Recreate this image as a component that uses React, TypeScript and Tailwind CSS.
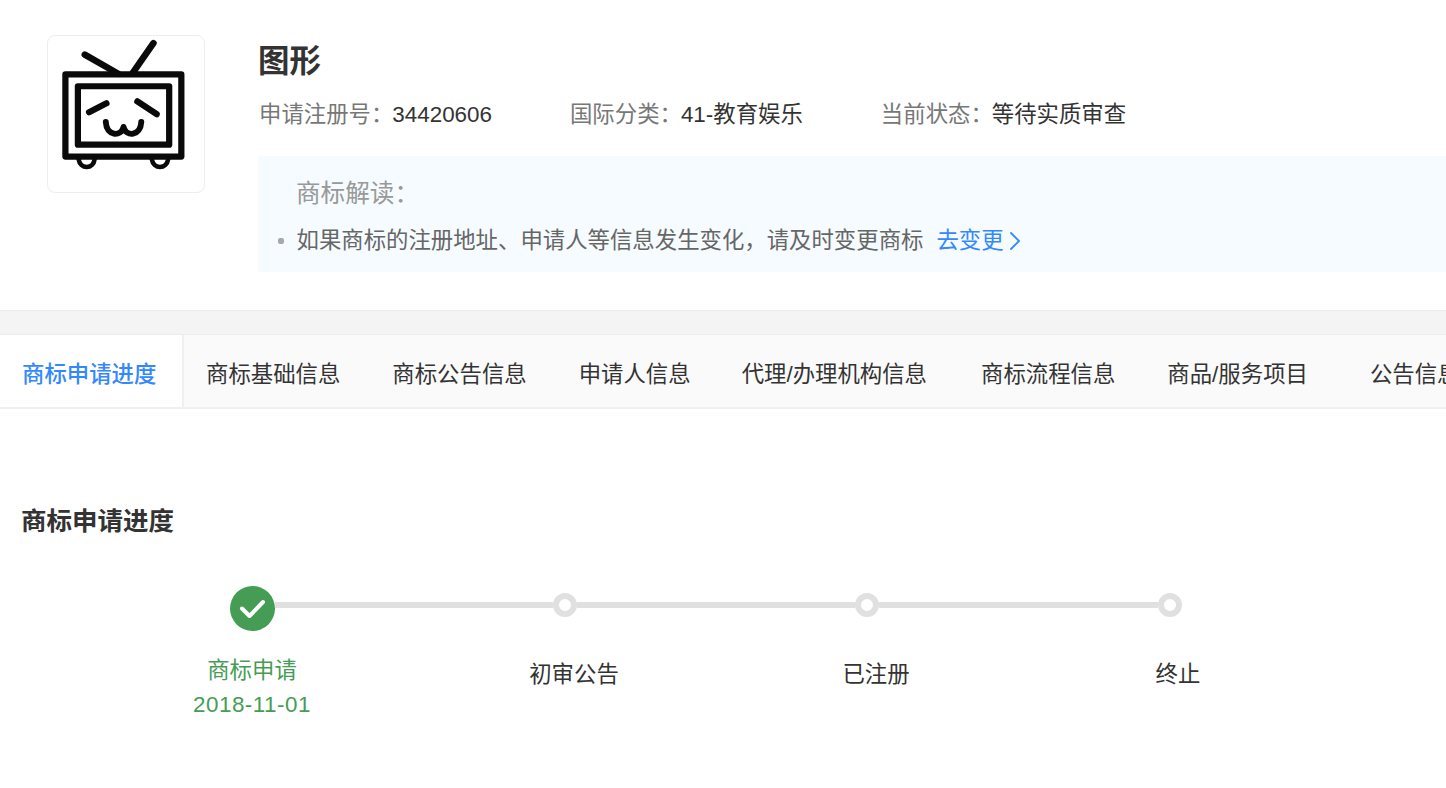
const tabs = [
  { label: '商标基础信息', className: 'pl-[22px] pr-[26px]' },
  { label: '商标公告信息', className: 'px-[26px]' },
  { label: '申请人信息', className: 'px-[26px]' },
  { label: '代理/办理机构信息', className: 'pl-[25px] pr-[28px]' },
  { label: '商标流程信息', className: 'px-[26px]' },
  { label: '商品/服务项目', className: 'px-[26px]' },
  { label: '公告信息', className: 'pl-[36px]' },
]

const infos = [
  { label: '申请注册号：', value: '34420606' },
  { label: '国际分类：', value: '41-教育娱乐' },
  { label: '当前状态：', value: '等待实质审查' },
]

function Logo() {
  return (
    <svg viewBox="50 43 475 475" className="h-full w-full" fill="none" stroke="#0a0a0a" strokeLinecap="round" strokeLinejoin="round">
      <path d="M162 100L264 158M371 65L308 155" strokeWidth="20" />
      <rect x="103" y="160" width="353" height="250" strokeWidth="19" />
      <rect x="141" y="196" width="278" height="178" strokeWidth="19" />
      <path d="M175 275L228 248M322 242L381 281" strokeWidth="19" />
      <path d="M226 305C228 347 272 352 280 320C288 352 332 347 334 305" strokeWidth="18" />
      <path d="M143 418C148 450 188 450 192 418M366 418C371 450 411 450 416 418" strokeWidth="14" />
    </svg>
  )
}

export default function App() {
  return (
    <div className="h-[788px] w-[1446px] overflow-hidden bg-white font-['Liberation_Sans','Noto_Sans_CJK_SC',sans-serif] text-[22.4px] text-[#333]">
      {/* Header */}
      <div className="flex h-[310px] pl-[47px] pt-[35px]">
        <div className="h-[158px] w-[158px] shrink-0 rounded-[8px] border border-[#eee] bg-white">
          <Logo />
        </div>
        <div className="ml-[53px] min-w-0 flex-1">
          <h1 className="h-[53px] text-[31.5px] font-bold leading-[53px]">图形</h1>
          <div className="mt-[11px] flex h-[32px] gap-[78px] pl-[1px] leading-[32px]">
            {infos.map((info) => (
              <div key={info.label} className="flex">
                <span className="mr-[-1px] text-[#777]">{info.label}</span>
                <span>{info.value}</span>
              </div>
            ))}
          </div>
          <div className="mt-[25px] h-[116px] bg-[#f5fbff] pl-[38px] pt-[21px]">
            <div className="text-[24.6px] leading-[34px] text-[#999]">商标解读：</div>
            <div className="relative ml-[0.5px] mt-[13px] flex items-center leading-[34px] text-[#666]">
              <span className="absolute left-[-19px] top-[14px] h-[6px] w-[6px] rounded-[2px] bg-[#a8a8a8]" />
              <span>如果商标的注册地址、申请人等信息发生变化，请及时变更商标</span>
              <span className="ml-[13px] text-[#3388ff]">去变更</span>
              <svg viewBox="0 0 12 20" className="ml-[5px] h-[20px] w-[12px]" fill="none" stroke="#3388ff" strokeWidth="1.8" strokeLinecap="round" strokeLinejoin="round">
                <path d="M2 2L10 10L2 18" />
              </svg>
            </div>
          </div>
        </div>
      </div>

      {/* Divider band */}
      <div className="h-[25px] border-y border-[#ececec] bg-[#f4f4f4]" />

      {/* Tabs */}
      <div className="flex h-[74px] whitespace-nowrap border-b-2 border-[#f0f0f0] bg-[#fafafa] leading-[80px]">
        <div className="w-[184px] shrink-0 border-r-2 border-[#f0f0f0] bg-white pl-[22px] font-medium text-[#3388ff]">商标申请进度</div>
        {tabs.map((tab) => (
          <div key={tab.label} className={`shrink-0 ${tab.className}`}>{tab.label}</div>
        ))}
      </div>

      {/* Progress */}
      <h2 className="ml-[21px] mt-[92px] h-[40px] text-[25.5px] font-bold leading-[40px]">商标申请进度</h2>
      <div className="ml-[230px] mt-[41px] flex h-[46px] items-center">
        <div className="mt-[6px] flex h-[45px] w-[45px] shrink-0 items-center justify-center rounded-full bg-[#459d55]">
          <svg viewBox="0 0 45 45" className="h-[45px] w-[45px]" fill="none" stroke="#fff" strokeWidth="4" strokeLinecap="round" strokeLinejoin="round">
            <path d="M12 22.5L19.5 30L33 16" />
          </svg>
        </div>
        <div className="h-[6px] w-[278px] bg-[#e0e0e0]" />
        <div className="h-[24px] w-[24px] shrink-0 rounded-full border-[6px] border-[#e0e0e0] bg-white" />
        <div className="h-[6px] w-[278px] bg-[#e0e0e0]" />
        <div className="h-[24px] w-[24px] shrink-0 rounded-full border-[6px] border-[#e0e0e0] bg-white" />
        <div className="h-[6px] w-[279px] bg-[#e0e0e0]" />
        <div className="h-[24px] w-[24px] shrink-0 rounded-full border-[6px] border-[#e0e0e0] bg-white" />
      </div>
      <div className="ml-[101px] mt-[26px] grid grid-cols-[322px_302px_302px_302px] text-center">
        <div className="pr-[20px] leading-[34px] text-[#459d55]">
          <div>商标申请</div>
          <div className="tracking-[0.5px]">2018-11-01</div>
        </div>
        <div className="pt-[4px] leading-[34px]">初审公告</div>
        <div className="pt-[4px] leading-[34px]">已注册</div>
        <div className="pt-[4px] leading-[34px]">终止</div>
      </div>
    </div>
  )
}
